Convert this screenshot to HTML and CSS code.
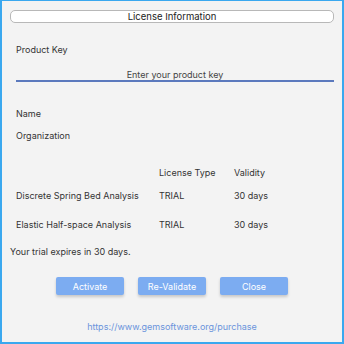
FILE: index.html
```html
<!DOCTYPE html>
<html lang="en">
<head>
  <meta charset="UTF-8">
  <title>License Information</title>
  <link rel="stylesheet" href="styles.css">
</head>
<body>
  <div class="window">
    <div class="title">License Information</div>

    <div class="label key-label">Product Key</div>
    <input class="key-input" type="text" placeholder="Enter your product key">

    <div class="label name">Name</div>
    <div class="label org">Organization</div>

    <div class="grid">
      <div class="row head">
        <div></div>
        <div>License Type</div>
        <div>Validity</div>
      </div>
      <div class="row first">
        <div>Discrete Spring Bed Analysis</div>
        <div>TRIAL</div>
        <div>30 days</div>
      </div>
      <div class="row second">
        <div>Elastic Half-space Analysis</div>
        <div>TRIAL</div>
        <div>30 days</div>
      </div>
    </div>

    <div class="expires">Your trial expires in 30 days.</div>

    <div class="buttons">
      <button>Activate</button>
      <button>Re-Validate</button>
      <button>Close</button>
    </div>

    <a class="link" href="#">https://www.gemsoftware.org/purchase</a>
  </div>
</body>
</html>
```

FILE: styles.css
```css
html, body {
  margin: 0;
  padding: 0;
}
body {
  font-family: Inter, "Liberation Sans", sans-serif;
  font-size: 9px;
  line-height: 11px;
  color: #333;
  width: 344px;
  height: 344px;
  background: #f3f3f3;
}
.window {
  box-sizing: border-box;
  width: 344px;
  height: 344px;
  border: 2px solid #3aa8ef;
  border-top-width: 1px;
  background: #f3f3f3;
  padding: 9px 8px 0 8px;
  display: flex;
  flex-direction: column;
}
.title {
  height: 11px;
  line-height: 11px;
  border: 1.5px solid #b8b8b8;
  border-radius: 5px;
  background: #fff;
  text-align: center;
  font-size: 9.5px;
  color: #222;
}
.label {
  padding-left: 6px;
}
.key-label {
  margin-top: 21px;
}
.key-input {
  margin: 14px 0 0 6px;
  width: 318px;
  box-sizing: border-box;
  border: none;
  border-bottom: 2px solid #5b79bd;
  background: transparent;
  font-family: inherit;
  font-size: 9px;
  text-align: center;
  padding: 0 0 1px 0;
  height: 13px;
  outline: none;
}
.key-input::placeholder {
  color: #444;
}
.name {
  margin-top: 26px;
}
.org {
  margin-top: 11px;
}
.grid {
  margin-top: 26px;
  padding-left: 6px;
}
.row {
  display: grid;
  grid-template-columns: 143px 75px 1fr;
}
.row.first {
  margin-top: 12px;
}
.row.second {
  margin-top: 18px;
}
.expires {
  margin-top: 16px;
}
.buttons {
  margin-top: 20px;
  display: flex;
  justify-content: center;
  gap: 14px;
}
.buttons button {
  width: 68px;
  height: 18px;
  border: none;
  border-radius: 2px;
  background: #7cacf1;
  color: #fff;
  font-family: inherit;
  font-size: 9px;
  box-shadow: 0 2px 3px rgba(0,0,0,0.18);
  padding: 0;
}
.link {
  margin-top: 26px;
  text-align: center;
  color: #6b93dc;
  text-decoration: none;
}
```
